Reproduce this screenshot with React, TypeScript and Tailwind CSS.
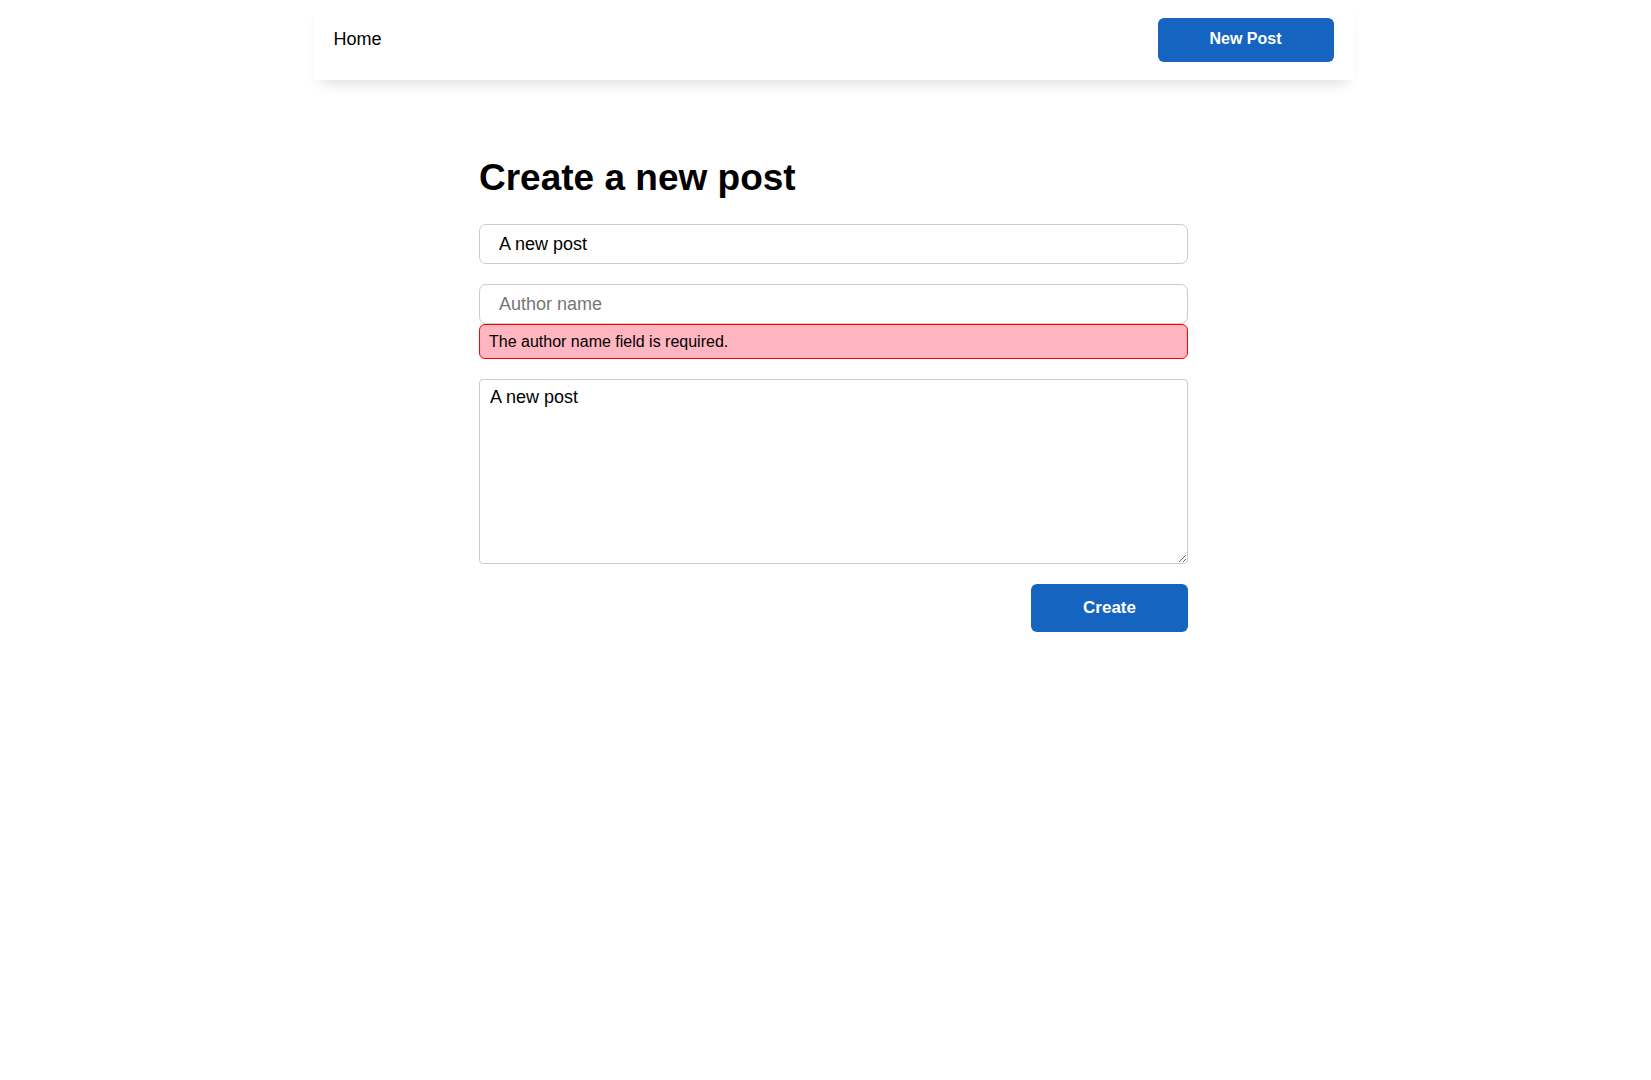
import { useState } from 'react';

const font = { fontFamily: '"Liberation Sans", Arial, Helvetica, sans-serif' };

export default function App() {
  const [title, setTitle] = useState('A new post');
  const [author, setAuthor] = useState('');
  const [body, setBody] = useState('A new post');

  return (
    <div className="min-h-screen bg-white pl-[16px] text-black" style={font}>
      {/* Top bar */}
      <header className="mx-auto flex h-[80px] w-[1040px] items-center justify-between bg-white px-[20px] pb-[2px] shadow-[0_10px_14px_-8px_rgba(0,0,0,0.16)]">
        <a href="#" className="text-[18px] leading-none text-black">
          Home
        </a>
        <button className="mt-[2px] h-[44px] w-[176px] rounded-[6px] bg-[#1565c0] pb-[2px] text-[16px] font-bold text-white">
          New Post
        </button>
      </header>

      {/* Form */}
      <main className="mx-auto w-[709px] pt-[77px]">
        <h1 className="mb-[25px] text-[37px] font-bold leading-[42px]">Create a new post</h1>

        <form className="flex flex-col" onSubmit={e => e.preventDefault()}>
          <input
            value={title}
            onChange={e => setTitle(e.target.value)}
            placeholder="Title"
            className="h-[40px] w-full rounded-[7px] border border-[#cccccc] px-[19px] text-[18px] outline-none placeholder:text-[#757575]"
          />

          <div className="mt-[20px] flex flex-col">
            <input
              value={author}
              onChange={e => setAuthor(e.target.value)}
              placeholder="Author name"
              className="h-[40px] w-full rounded-[7px] border border-[#cccccc] px-[19px] text-[18px] outline-none placeholder:text-[#757575]"
            />
            <div className="flex h-[35px] items-center rounded-[6px] border border-[#ff0000] bg-[#ffb6c1] px-[9px] text-[16px]">
              The author name field is required.
            </div>
          </div>

          <textarea
            value={body}
            onChange={e => setBody(e.target.value)}
            className="mt-[20px] h-[185px] w-full rounded-[4px] border border-[#cccccc] px-[10px] py-[6px] text-[18px] leading-[22px] outline-none"
          />

          <div className="mt-[20px] flex justify-end">
            <button
              type="submit"
              className="h-[48px] w-[157px] rounded-[6px] bg-[#1565c0] text-[17px] font-bold text-white"
            >
              Create
            </button>
          </div>
        </form>
      </main>
    </div>
  );
}
